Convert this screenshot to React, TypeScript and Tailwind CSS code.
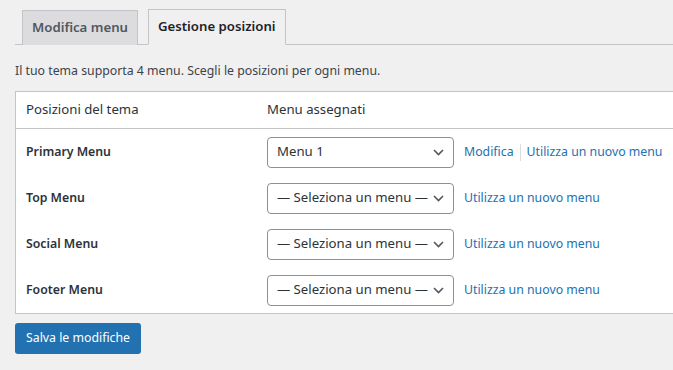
const rows = [
  { label: "Primary Menu", value: "Menu 1", edit: true },
  { label: "Top Menu", value: "— Seleziona un menu —", edit: false },
  { label: "Social Menu", value: "— Seleziona un menu —", edit: false },
  { label: "Footer Menu", value: "— Seleziona un menu —", edit: false },
]

function MenuSelect({ value }: { value: string }) {
  return (
    <div className="flex items-center justify-between w-[187px] h-[31px] pl-[9px] pr-[9px] border border-[#8c8f94] rounded-[4px] bg-white text-[13.2px] text-[#2c3338]">
      <span className="whitespace-nowrap">{value}</span>
      <svg width="11" height="7" viewBox="0 0 11 7" className="shrink-0 ml-[2px]">
        <path d="M1 1l4.5 4.5L10 1" fill="none" stroke="#50575e" strokeWidth="1.6" />
      </svg>
    </div>
  )
}

export default function App() {
  return (
    <div
      className="w-[673px] h-[370px] overflow-hidden bg-[#f0f0f1] text-[#3c434a]"
      style={{ fontFamily: '"Noto Sans", "Open Sans", sans-serif' }}
    >
      {/* Tabs */}
      <div className="flex items-end ml-[15px] h-[45px] border-b border-[#c3c4c7] pl-[7px]">
        <div className="h-[35px] px-[9px] flex items-center bg-[#dcdcde] border border-[#c3c4c7] border-b-0 text-[13.2px] font-semibold text-[#50575e] -mb-px">
          Modifica menu
        </div>
        <div className="h-[36px] ml-[10px] px-[9px] flex items-center bg-[#f0f0f1] border border-[#c3c4c7] border-b-[#f0f0f1] text-[13.2px] font-semibold text-[#1d2327] -mb-px">
          Gestione posizioni
        </div>
      </div>

      <p className="ml-[15px] mt-[16px] text-[12.3px] leading-[20px] text-[#3c434a]">
        Il tuo tema supporta 4 menu. Scegli le posizioni per ogni menu.
      </p>

      {/* Table */}
      <div className="ml-[15px] mt-[10px] w-[680px] bg-white border border-[#c3c4c7]">
        <div className="flex items-center h-[37px] border-b border-[#c3c4c7] text-[13.2px] text-[#2c3338]">
          <div className="w-[251px] pl-[10px]">Posizioni del tema</div>
          <div>Menu assegnati</div>
        </div>
        <div>
          {rows.map((r) => (
            <div key={r.label} className="flex items-center h-[46px]">
              <div className="w-[251px] pl-[10px] text-[12.3px] font-semibold text-[#2c3338]">{r.label}</div>
              <MenuSelect value={r.value} />
              <div className="flex items-center ml-[10px] text-[12.3px] text-[#2271b1]">
                {r.edit && (
                  <>
                    <span>Modifica</span>
                    <span className="mx-[6px] w-px h-[17px] bg-[#dcdcde]" />
                  </>
                )}
                <span>Utilizza un nuovo menu</span>
              </div>
            </div>
          ))}
        </div>
      </div>

      <button className="ml-[15px] mt-[9px] h-[31px] px-[11px] rounded-[3px] bg-[#2271b1] text-white text-[12.3px]">
        Salva le modifiche
      </button>
    </div>
  )
}
